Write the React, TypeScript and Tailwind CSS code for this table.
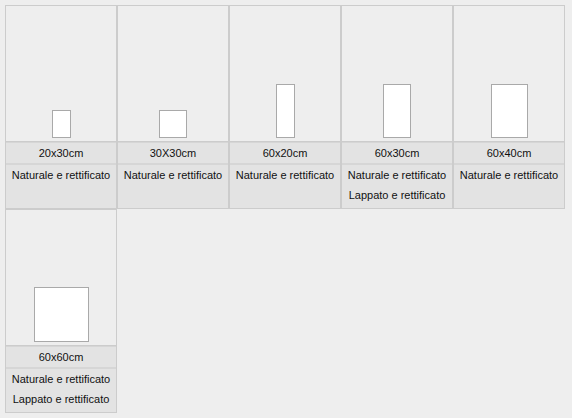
import React from 'react';

type Tile = { size: string; w: number; h: number; finishes: string[] };

const tiles: Tile[] = [
  { size: '20x30cm', w: 19, h: 28, finishes: ['Naturale e rettificato'] },
  { size: '30X30cm', w: 28, h: 28, finishes: ['Naturale e rettificato'] },
  { size: '60x20cm', w: 19, h: 54, finishes: ['Naturale e rettificato'] },
  { size: '60x30cm', w: 28, h: 54, finishes: ['Naturale e rettificato', 'Lappato e rettificato'] },
  { size: '60x40cm', w: 37, h: 54, finishes: ['Naturale e rettificato'] },
  { size: '60x60cm', w: 55, h: 55, finishes: ['Naturale e rettificato', 'Lappato e rettificato'] },
];

function TileCard({ tile }: { tile: Tile }) {
  return (
    <div className="w-[112px] flex flex-col border border-[#cccccc] bg-[#e3e3e3]">
      {/* preview */}
      <div className="h-[136px] flex items-end justify-center pb-[3px] bg-[#eeeeee] border-b border-[#cccccc]">
        <div
          className="border border-[#a9a9a9] bg-white"
          style={{ width: `${tile.w}px`, height: `${tile.h}px` }}
        />
      </div>
      {/* size */}
      <div className="h-[22px] flex items-center justify-center border-y border-[#d6d6d6] bg-[#e3e3e3]">
        {tile.size}
      </div>
      {/* finishes */}
      <div className="flex-1 flex flex-col items-center pb-[3px] border-t border-[#d6d6d6] bg-[#e3e3e3]">
        {tile.finishes.map((f) => (
          <div key={f} className="leading-[20px] h-[20px]">
            {f}
          </div>
        ))}
      </div>
    </div>
  );
}

export default function App() {
  return (
    <div className="w-[572px] h-[418px] bg-[#eeeeee] p-[5px] font-['Liberation_Sans',Arial,sans-serif] text-[11px] text-[#111111]">
      <div className="flex flex-wrap w-[560px]">
        {tiles.map((t) => (
          <TileCard key={t.size} tile={t} />
        ))}
      </div>
    </div>
  );
}
